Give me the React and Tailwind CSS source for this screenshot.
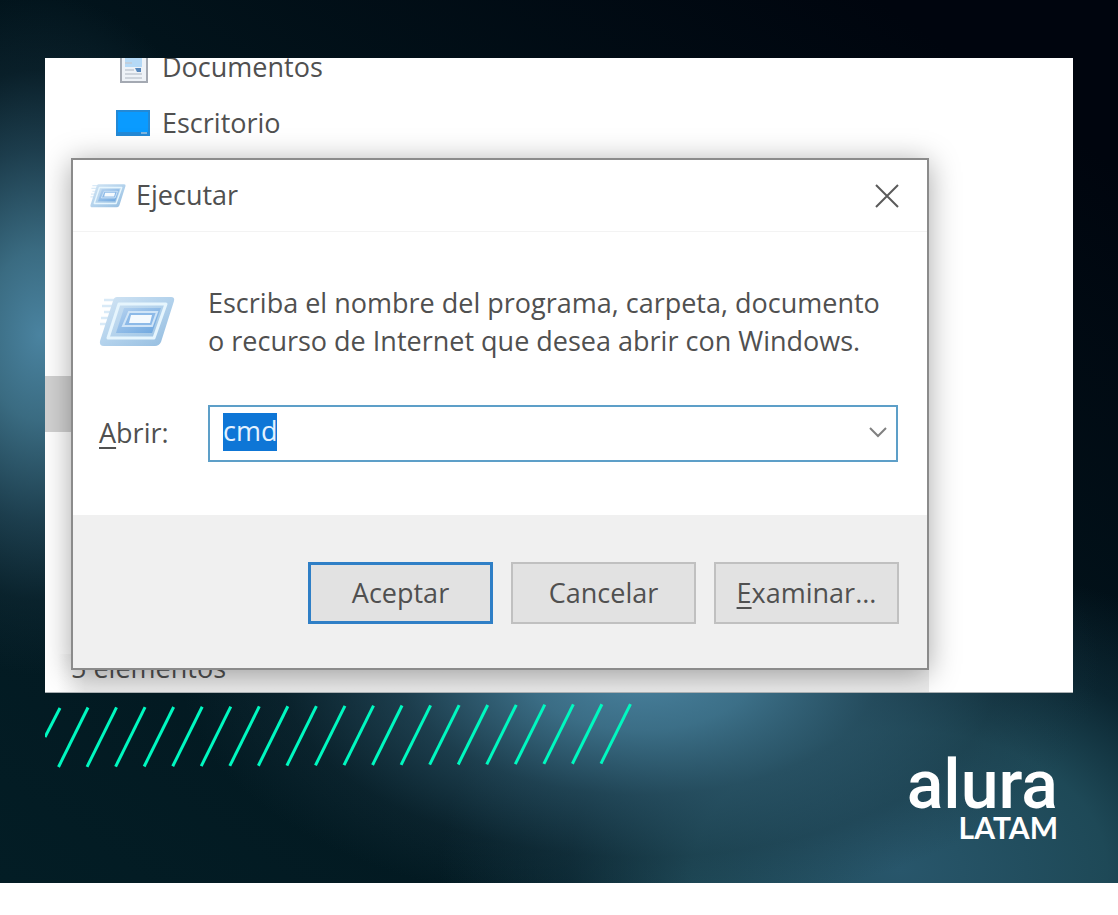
import { useId } from "react";

function RunIcon({ className }) {
  const id = useId();
  return (
    <svg viewBox="0 0 76 52" className={className} aria-hidden="true">
      <defs>
        <linearGradient id={id} x1="0" y1="0" x2="1" y2="1">
          <stop offset="0" stopColor="#d3e5f4" />
          <stop offset="0.5" stopColor="#b3d2ec" />
          <stop offset="1" stopColor="#93bcdf" />
        </linearGradient>
        <linearGradient id={id + "i"} x1="0" y1="0" x2="1" y2="1">
          <stop offset="0" stopColor="#b5d2f0" />
          <stop offset="1" stopColor="#6ba5de" />
        </linearGradient>
      </defs>
      <path d="M5 4H20M3 10H18M5 16H16M2 22H14M1 28H12" stroke="#d9eaf7" strokeWidth="2.5" />
      <path d="M18 1H72Q76 1 75 5L62 46Q60 50 56 50H5Q0 50 1 45L14 5Q15 1 18 1Z" fill={`url(#${id})`} />
      <path d="M20 8H67L55 42H9Z" fill="none" stroke="#e6f5fd" strokeWidth="3" strokeLinejoin="round" />
      <path d="M25 12H62L53 37H17Z" fill={`url(#${id}i)`} />
      <path d="M30 16H58L53 30H24Z" fill="#8dbae8" stroke="#cfe4f7" strokeWidth="2" />
      <path d="M32 19H53L51 27H30Z" fill="#f5fafe" />
    </svg>
  );
}

function DocumentIcon() {
  return (
    <svg viewBox="0 0 28 32" className="h-8 w-7" aria-hidden="true">
      <rect x="1" y="1" width="26" height="30" fill="#eef2f7" stroke="#a4a9b2" strokeWidth="2" />
      <rect x="5" y="5" width="17" height="11" fill="#b5d9f6" />
      <path d="M5 12H12M5 19H14M5 23H22M5 27H22" stroke="#c3cad4" strokeWidth="1.5" />
      <path d="M15 17h6v4h-4z" fill="#5788bd" />
    </svg>
  );
}

function DesktopIcon() {
  return (
    <svg viewBox="0 0 34 26" className="h-[26px] w-[34px]" aria-hidden="true">
      <rect width="34" height="26" fill="#2389d6" />
      <rect x="2" y="2" width="30" height="20" fill="#0a9bff" />
      <path d="M25 23h6" stroke="#7fb4dc" strokeWidth="2" />
    </svg>
  );
}

const stripes = Array.from({ length: 20 }, (_, i) => i);

function Stripes() {
  return (
    <svg viewBox="0 0 588 66" className="h-[66px] w-[588px]" aria-hidden="true">
      <g stroke="#00f8c0" strokeWidth="3">
        <path d="M0 34L15 5" />
        {stripes.map((i) => (
          <path key={i} d={`M${13.5 + i * 28.55} ${64 - i * 0.18}L${43 + i * 28.55} ${4.5 - i * 0.18}`} />
        ))}
      </g>
    </svg>
  );
}

function RunDialog() {
  return (
    <section
      role="dialog"
      aria-labelledby="run-title"
      className="relative z-10 mr-36 ml-[26px] border-2 border-[#8b8b8b] bg-white shadow-[0_4px_28px_rgba(0,0,0,0.35)]"
    >
      <header className="flex h-[72px] items-center border-b border-[#f3f3f3] pr-6 pl-[17px]">
        <RunIcon className="h-[26px] w-9" />
        <h1 id="run-title" className="ml-[10px] flex-1">Ejecutar</h1>
        <button type="button" aria-label="Cerrar" className="p-1">
          <svg viewBox="0 0 24 24" className="size-6" fill="none" stroke="#5a5a5a" strokeWidth="2">
            <path d="M1 1L23 23M23 1L1 23" />
          </svg>
        </button>
      </header>
      <div className="grid grid-cols-[109px_1fr] items-center gap-y-[45px] pt-[52px] pr-[29px] pb-[53px] pl-[26px]">
        <RunIcon className="h-[52px] w-[76px]" />
        <p className="leading-[38px] whitespace-nowrap">
          Escriba el nombre del programa, carpeta, documento
          <br />o recurso de Internet que desea abrir con Windows.
        </p>
        <label htmlFor="open">
          <span className="underline underline-offset-4">A</span>brir:
        </label>
        <div className="flex h-[57px] items-center border-2 border-[#5d9fc8] pr-2 pb-1 pl-[13px]">
          <input
            id="open"
            defaultValue="cmd"
            className="h-[38px] field-sizing-content bg-[#0e76d6] text-[#e4f2ff] outline-none"
          />
          <button type="button" aria-label="Mostrar opciones" className="ml-auto">
            <svg viewBox="0 0 20 12" className="h-3 w-5" fill="none" stroke="#808080" strokeWidth="2">
              <path d="M2 2L10 10L18 2" />
            </svg>
          </button>
        </div>
      </div>
      <footer className="flex justify-end gap-[18px] bg-[#f0f0f0] pt-[47px] pr-7 pb-[44px]">
        <button type="button" className="h-[62px] w-[185px] border-[3px] border-[#2f7fc6] bg-[#e2e2e2]">Aceptar</button>
        <button type="button" className="h-[62px] w-[185px] border-2 border-[#c0c0c0] bg-[#e2e2e2]">Cancelar</button>
        <button type="button" className="h-[62px] w-[185px] border-2 border-[#c0c0c0] bg-[#e2e2e2]">
          <span className="underline underline-offset-4">E</span>xaminar...
        </button>
      </footer>
    </section>
  );
}

export default function App() {
  return (
    <div className="min-h-screen bg-white">
      <main className="bg-[radial-gradient(ellipse_220px_340px_at_40px_335px,#4a83a0_0%,#42778fe0_25%,#2c5468a0_55%,#1a364450_78%,#1a364400_100%),radial-gradient(ellipse_460px_240px_at_640px_670px,#4a83a0_0%,#427892e0_25%,#2c5468a0_52%,#1a364450_78%,#1a364400_100%),radial-gradient(ellipse_460px_310px_at_900px_870px,#28566b_0%,#22505fe0_45%,#14384680_72%,#14384600_100%),linear-gradient(35deg,#031d25_0%,#02141c_55%,#00050e_90%)] px-[45px] pt-[58px] pb-[42px]">
        <div className="relative overflow-hidden border-b border-[#a9afb2] bg-white font-['Open_Sans','Noto_Sans',sans-serif] text-[27px] text-[#505050]">
          <div className="absolute top-[318px] left-0 h-14 w-10 bg-[#d2d2d2]" />
          <ul className="-mt-[9px] mb-[17px] pl-[71px] leading-[36px]">
            <li className="mb-5 flex items-center gap-[14px] pl-1">
              <DocumentIcon />
              Documentos
            </li>
            <li className="flex items-center gap-3">
              <DesktopIcon />
              Escritorio
            </li>
          </ul>
          <RunDialog />
          <p className="-mt-4 mr-36 h-[38px] bg-linear-to-r from-white from-[12px] to-[#ececec] to-[40px] pl-[26px] leading-[28px]">
            5 elementos
          </p>
        </div>
        <div className="flex items-start justify-between pt-[10px] pr-[15px]">
          <Stripes />
          <div className="flex flex-col items-end pt-[54px] text-white">
            <span className="font-['Roboto',sans-serif] text-[68px] leading-[56px] font-medium">alura</span>
            <span className="font-['Lato',sans-serif] text-[30px] leading-[28px] font-bold">LATAM</span>
          </div>
        </div>
      </main>
    </div>
  );
}
